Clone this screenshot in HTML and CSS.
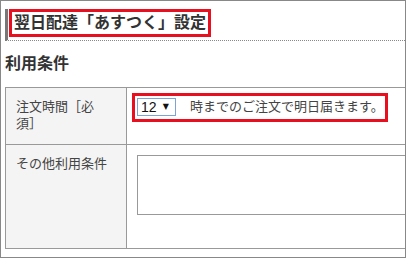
FILE: index.html
```html
<!DOCTYPE html>
<html lang="ja">
<head>
<meta charset="UTF-8">
<meta name="viewport" content="width=device-width, initial-scale=1.0">
<title>翌日配達「あすつく」設定</title>
<link rel="stylesheet" href="styles.css">
</head>
<body>

<div class="frame">
  <h2 class="page-title"><span class="mark">翌日配達「あすつく」設定</span></h2>

  <h3 class="section-title">利用条件</h3>

  <div class="conditions">
    <div class="label">注文時間［必須］</div>
    <div class="value">
      <div class="mark order-time">
        <span class="time-select">
          <select id="orderHour">
            <option>11</option>
            <option selected>12</option>
            <option>13</option>
          </select>
        </span>
        <span class="note">時までのご注文で明日届きます。</span>
      </div>
    </div>

    <div class="label">その他利用条件</div>
    <div class="value">
      <textarea id="otherConditions"></textarea>
    </div>
  </div>
</div>

</body>
</html>
```

FILE: styles.css
```css
body {
  margin: 0;
  background-color: #fff;
  font-family: "Liberation Sans", "Noto Sans CJK JP", sans-serif;
  color: #333;
}
.frame {
  box-sizing: border-box;
  width: 406px;
  height: 258px;
  padding: 8px 0 0 4px;
  border: 1px solid #888;
  overflow: hidden;
}
.mark {
  border: 3px solid #e8101e;
}
.page-title {
  margin: 0;
  padding-left: 1px;
  height: 31px;
  border-left: 3px solid #777;
  border-bottom: 1px dotted #888;
  font-size: 16px;
  font-weight: bold;
}
.page-title .mark {
  display: inline-block;
  padding: 0 2px;
  line-height: 22px;
}
.section-title {
  margin: 13px 0 13px 0;
  font-size: 16px;
  font-weight: bold;
  line-height: 20px;
}
.conditions {
  display: grid;
  grid-template-columns: 121px 300px;
  grid-template-rows: 57px 104px;
  border-top: 1px solid #999;
  border-left: 1px solid #999;
}
.label,
.value {
  border-right: 1px solid #999;
  border-bottom: 1px solid #999;
}
.label {
  padding: 10px 16px 0 10px;
  background-color: #f4f4f4;
  color: #444;
  font-size: 13px;
  line-height: 17px;
}
.value {
  padding: 5px 0 0 5px;
}
.order-time {
  display: inline-flex;
  align-items: center;
  gap: 14px;
  padding: 2px 1px 3px 2px;
}
.time-select {
  position: relative;
  display: block;
}
.time-select select {
  appearance: none;
  -webkit-appearance: none;
  display: block;
  box-sizing: border-box;
  width: 39px;
  height: 18px;
  margin: 0;
  padding: 0 0 0 3px;
  border: 1px solid #7da2d6;
  border-radius: 0;
  background-color: #fff;
  font-family: "Liberation Sans", sans-serif;
  font-size: 14px;
  color: #111;
  outline: none;
}
.time-select:after {
  content: "▼";
  position: absolute;
  top: 3px;
  right: 7px;
  font-family: "DejaVu Sans", sans-serif;
  font-size: 8px;
  line-height: 12px;
  color: #111;
  pointer-events: none;
}
.note {
  font-size: 13px;
  line-height: 18px;
  color: #444;
}
.conditions .value:last-child {
  padding: 10px 0 0 10px;
}
textarea {
  display: block;
  box-sizing: border-box;
  width: 290px;
  height: 60px;
  margin: 0;
  border: 1px solid #999;
  resize: none;
  outline: none;
}
```
